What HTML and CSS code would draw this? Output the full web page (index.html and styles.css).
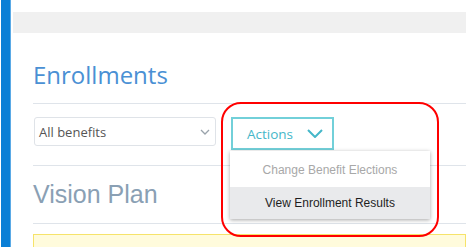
FILE: index.html
```html
<!DOCTYPE html>
<html lang="en">
<head>
    <meta charset="UTF-8">
    <title>Enrollments</title>
    <link rel="stylesheet" href="styles.css">
</head>
<body>
    <div class="page">
        <div class="rail"></div>
        <div class="main">
            <div class="topbar"></div>
            <div class="content">
                <div class="heading">
                    <h1>Enrollments</h1>
                </div>

                <div class="toolbar">
                    <div class="select">
                        <span>All benefits</span>
                        <svg class="select-chevron" viewBox="0 0 10 6" width="10" height="6">
                            <path d="M1 1l4 4 4-4" fill="none" stroke="#9aa3ab" stroke-width="1.3"/>
                        </svg>
                    </div>

                    <div class="actions">
                        <button class="actions-btn">
                            Actions
                            <svg viewBox="0 0 16 9" width="16" height="9">
                                <path d="M1 1l7 7 7-7" fill="none" stroke="#45b7c9" stroke-width="2"/>
                            </svg>
                        </button>
                        <div class="menu">
                            <div class="menu-item disabled">Change Benefit Elections</div>
                            <div class="menu-item active">View Enrollment Results</div>
                        </div>
                    </div>
                    <div class="callout"></div>
                </div>

                <div class="plan">
                    <h2>Vision Plan</h2>
                </div>
                <div class="notice"></div>
            </div>
        </div>
    </div>
</body>
</html>
```

FILE: styles.css
```css
body {
    margin: 0;
    background: #fff;
    font-family: "Open Sans", Arial, sans-serif;
}

.page {
    display: flex;
    height: 247px;
    overflow: hidden;
}

.rail {
    width: 9px;
    margin-left: 1px;
    background-color: #0a7fd6;
    border-right: 1px solid #5aaae6;
}

.main {
    flex: 1;
    padding-top: 12px;
    padding-left: 2px;
}

.topbar {
    height: 21px;
    background-color: #f0f0f0;
}

.content {
    padding-left: 20px;
    position: relative;
}

.heading {
    height: 70px;
    border-bottom: 1px solid #dfe4ea;
    display: flex;
    align-items: flex-end;
}

.heading h1 {
    margin: 0 0 12px 0;
    font-weight: 400;
    font-size: 24px;
    line-height: 32px;
    color: #4a90d4;
}

.toolbar {
    height: 62px;
    border-bottom: 1px solid #dfe4ea;
    display: flex;
    align-items: flex-start;
    padding-top: 13px;
    box-sizing: border-box;
    position: relative;
}

.select {
    width: 182px;
    height: 29px;
    margin-left: 1px;
    box-sizing: border-box;
    border: 1px solid #dfe3e8;
    border-radius: 3px;
    display: flex;
    align-items: center;
    justify-content: space-between;
    padding: 0 5px 0 4px;
    font-size: 13px;
    color: #555;
}

.select-chevron {
    margin-top: 1px;
}

.actions {
    position: relative;
    margin-left: 15px;
}

.actions-btn {
    width: 103px;
    height: 33px;
    box-sizing: border-box;
    border: 2px solid #72d0d9;
    background: #fff;
    color: #45b7c9;
    font-family: "Open Sans", Arial, sans-serif;
    font-size: 13.5px;
    display: flex;
    align-items: center;
    padding: 0 0 0 14px;
    gap: 14px;
}

.menu {
    position: absolute;
    left: -1px;
    top: 34px;
    width: 200px;
    background: #fff;
    box-shadow: 0 1px 4px rgba(0, 0, 0, 0.35);
    font-family: "Liberation Sans", Arial, sans-serif;
    font-size: 12px;
    z-index: 2;
}

.menu-item {
    text-align: center;
}

.menu-item.disabled {
    height: 36px;
    line-height: 39px;
    color: #a8a8a8;
}

.menu-item.active {
    height: 32px;
    line-height: 33px;
    background-color: #e9eaec;
    color: #1e1e1e;
}

.callout {
    position: absolute;
    left: 188px;
    top: -2px;
    width: 214px;
    height: 131px;
    border: 2.5px solid #f00;
    border-radius: 20px;
    z-index: 3;
}

.plan {
    height: 57px;
    border-bottom: 1px solid #dfe4ea;
    display: flex;
    align-items: flex-end;
}

.plan h2 {
    margin: 0 0 14px 0;
    font-family: "Liberation Sans", Arial, sans-serif;
    font-weight: 400;
    font-size: 25px;
    line-height: 30px;
    color: #8aa0b4;
}

.notice {
    margin-top: 10px;
    height: 40px;
    border: 1px solid #f6e36a;
    background-color: #fffbdc;
}
```
